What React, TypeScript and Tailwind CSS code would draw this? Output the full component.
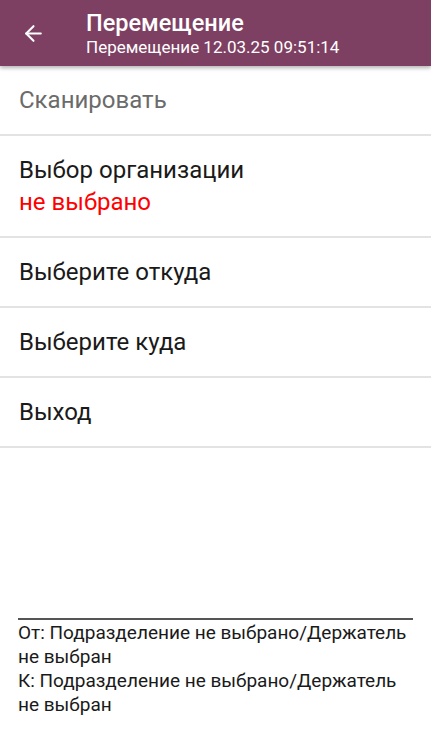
import { ArrowLeft } from "lucide-react"

const font = { fontFamily: "Roboto, 'Noto Sans', sans-serif" }

function Row({ children, className = "" }: { children: React.ReactNode; className?: string }) {
  return (
    <div className={`flex flex-col justify-center border-b-2 border-[#e3e3e3] px-[19px] ${className}`}>
      {children}
    </div>
  )
}

export default function App() {
  return (
    <div className="flex h-[738px] w-full flex-col bg-white" style={font}>
      <header className="relative z-10 flex h-[66px] items-center bg-[#7e4062] shadow-[0_2px_4px_rgba(0,0,0,0.3)]">
        <div className="flex w-[86px] items-center pl-[21px]">
          <ArrowLeft className="h-[25px] w-[25px] text-white" strokeWidth={2} />
        </div>
        <div className="flex flex-col text-white">
          <span className="text-[23.5px] font-medium leading-[28px]">Перемещение</span>
          <span className="text-[17px] leading-[20px]">Перемещение 12.03.25 09:51:14</span>
        </div>
      </header>

      <Row className="h-[70px]">
        <span className="text-[24px] text-[#6b6b6b]">Сканировать</span>
      </Row>
      <Row className="h-[102px]">
        <span className="text-[24px] leading-[32px] text-[#1a1a1a]">Выбор организации</span>
        <span className="text-[24px] leading-[32px] text-[#ff0000]">не выбрано</span>
      </Row>
      <Row className="h-[70px]">
        <span className="text-[24px] text-[#1a1a1a]">Выберите откуда</span>
      </Row>
      <Row className="h-[70px]">
        <span className="text-[24px] text-[#1a1a1a]">Выберите куда</span>
      </Row>
      <Row className="h-[70px]">
        <span className="text-[24px] text-[#1a1a1a]">Выход</span>
      </Row>

      <div className="flex-1" />

      <div className="mx-[18px] mb-[21px] border-t-2 border-[#555555] pt-[1px]">
        <div className="-mr-[4px] text-[19px] leading-[24px] text-[#1a1a1a]">
          <p>От: Подразделение не выбрано/&#8288;Держатель не выбран</p>
          <p>К: Подразделение не выбрано/&#8288;Держатель не выбран</p>
        </div>
      </div>
    </div>
  )
}
